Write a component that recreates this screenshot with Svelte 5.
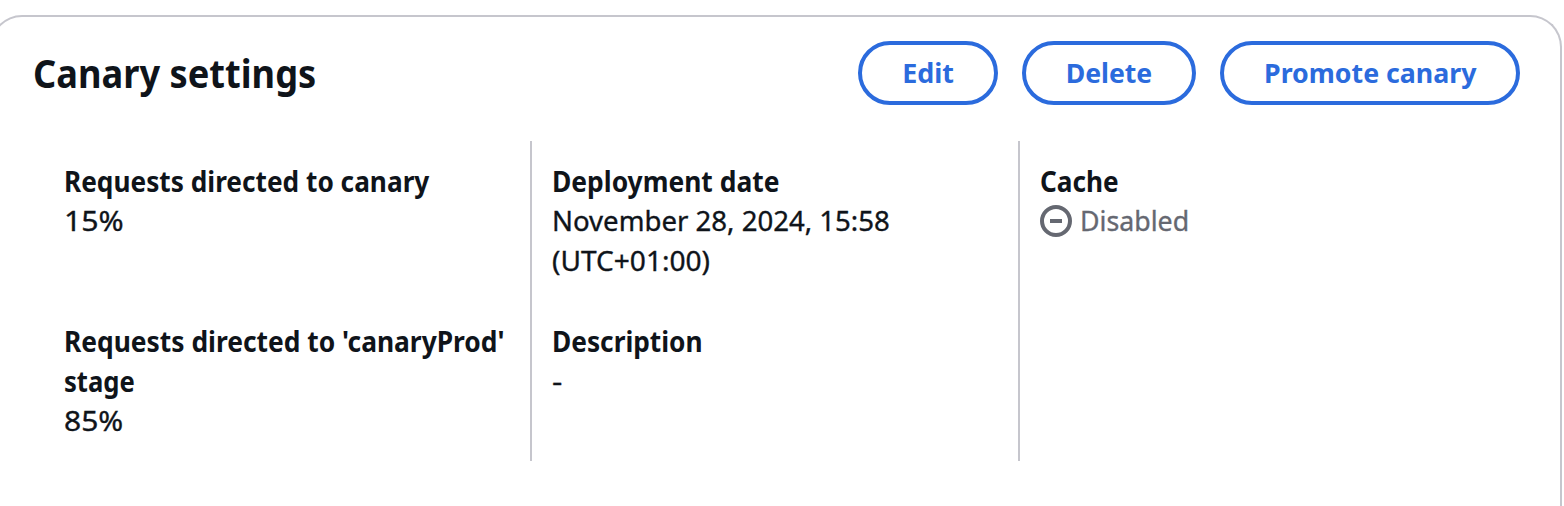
<script>
  const actions = [
    { label: 'Edit', width: 140, fit: 0.995 },
    { label: 'Delete', width: 174, fit: 0.985 },
    { label: 'Promote canary', width: 300, fit: 0.99 }
  ];

  const columns = [
    [
      { label: [['Requests directed to canary', 0.937]], value: [['15%', 1.08]] },
      {
        label: [["Requests directed to 'canaryProd'", 0.942], ['stage', 0.915]],
        value: [['85%', 1.07]]
      }
    ],
    [
      {
        label: [['Deployment date', 0.943]],
        value: [['November 28, 2024, 15:58', 0.985], ['(UTC+01:00)', 1.003]]
      },
      { label: [['Description', 0.938]], value: [['-', 1.15]] }
    ],
    [{ label: [['Cache', 0.935]], value: [['Disabled', 0.955]], disabled: true }]
  ];
</script>

<section class="card">
  <header>
    <h2><span class="line" style="--fit: 0.929">Canary settings</span></h2>
    <div class="actions">
      {#each actions as { label, width, fit }}
        <button type="button" style="width: {width}px">
          <span class="line" style="--fit: {fit}">{label}</span>
        </button>
      {/each}
    </div>
  </header>

  <div class="columns">
    {#each columns as items}
      <div class="column">
        {#each items as item}
          <dl>
            <dt>
              {#each item.label as [text, fit]}
                <span class="line" style="--fit: {fit}">{text}</span>
              {/each}
            </dt>
            <dd class:disabled={item.disabled}>
              {#if item.disabled}
                <svg viewBox="0 0 16 16" width="32" height="32" fill="none" stroke="currentColor" stroke-width="2" aria-hidden="true">
                  <circle cx="8" cy="8" r="7" />
                  <path d="M5 8h6" />
                </svg>
              {/if}
              <div class="value">
                {#each item.value as [text, fit]}
                  <span class="line" style="--fit: {fit}">{text}</span>
                {/each}
              </div>
            </dd>
          </dl>
        {/each}
      </div>
    {/each}
  </div>
</section>

<style>
  :global(body) {
    margin: 0;
    background: #fff;
    overflow: hidden;
  }

  :global(#app) {
    display: flow-root;
  }

  .card {
    box-sizing: border-box;
    width: 1572px;
    height: 491px;
    margin: 15px 0 0 -10px;
    padding: 24px 40px 0;
    border: 2px solid #c6c6cd;
    border-bottom: 0;
    border-radius: 32px 32px 0 0;
    background: #fff;
    color: #0f141a;
    font: 28px/40px 'Noto Sans', sans-serif;
  }

  header {
    display: flex;
    align-items: center;
    justify-content: space-between;
    height: 64px;
  }

  h2 {
    margin: 0 0 0 1px;
    font-size: 39px;
    line-height: 48px;
    font-weight: 700;
  }

  .actions {
    display: flex;
    gap: 24px;
  }

  button {
    box-sizing: border-box;
    display: flex;
    align-items: center;
    justify-content: center;
    height: 64px;
    padding: 0;
    border: 4px solid #2b6bdd;
    border-radius: 32px;
    background: #fff;
    color: #2b6bdd;
    font: 700 27px/40px 'Noto Sans', sans-serif;
  }

  .line {
    display: block;
    width: max-content;
    white-space: nowrap;
    transform: scaleX(var(--fit));
    transform-origin: left;
  }

  button .line {
    transform-origin: center;
  }

  .columns {
    display: grid;
    grid-template-columns: repeat(3, 488px);
    height: 320px;
    margin-top: 36px;
    margin-left: 10px;
  }

  .column {
    display: flex;
    flex-direction: column;
    gap: 40px;
    padding: 20px 0 20px 20px;
    border-left: 2px solid #c6c6cd;
  }

  .column:first-child {
    border-color: transparent;
  }

  dl {
    min-height: 120px;
    margin: 0;
  }

  dt {
    font-weight: 700;
  }

  dd {
    display: flex;
    align-items: center;
    gap: 8px;
    margin: 0;
  }

  .value {
    margin: -1px 0 1px;
    -webkit-text-stroke: 0.35px currentColor;
  }

  .disabled {
    color: #656871;
  }
</style>
